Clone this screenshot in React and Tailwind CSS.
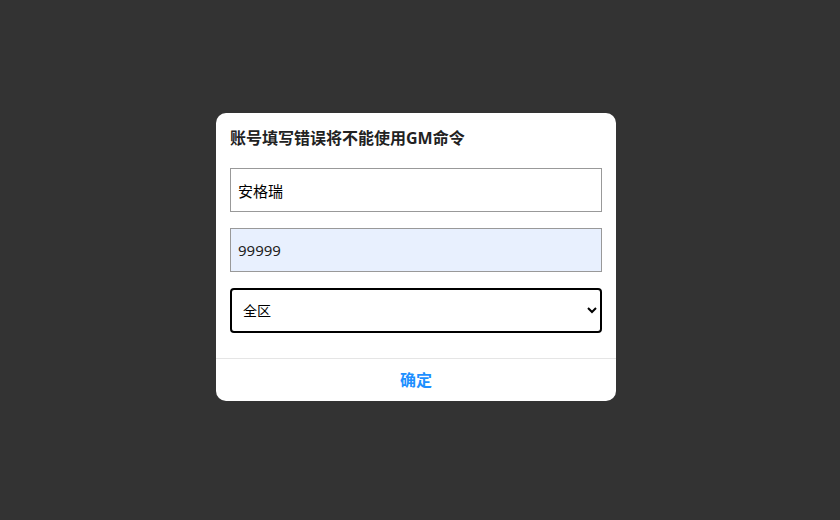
import React from 'react';

const App = () => {
  return (
    <div
      className="w-[840px] h-[520px] bg-[#333333] flex items-center justify-center pr-[8px] pb-[6px]"
      style={{ fontFamily: '"Noto Sans", "Noto Sans CJK SC", sans-serif' }}
    >
      <div className="w-[400px] h-[288px] bg-white rounded-[10px] flex flex-col overflow-hidden">
        {/* Body */}
        <div className="px-[14px] pt-[14px] flex-1">
          <h2 className="text-[16px] font-bold text-[#222] leading-[22px] mb-[19px]">
            账号填写错误将不能使用GM命令
          </h2>
          <input
            type="text"
            defaultValue="安格瑞"
            className="block w-full h-[44px] border border-[#999] px-[7px] text-[15px] text-black outline-none"
          />
          <input
            type="text"
            defaultValue="99999"
            className="block w-full h-[44px] mt-[16px] border border-[#999] bg-[#e8f0fe] px-[7px] text-[15px] text-[#222] outline-none"
          />
          <select
            defaultValue="all"
            className="block w-full h-[45px] mt-[16px] border-2 border-black rounded-[4px] px-[7px] text-[14px] text-black bg-white"
            style={{ appearance: 'auto' }}
          >
            <option value="all">全区</option>
          </select>
        </div>

        {/* Footer */}
        <div className="border-t border-[#e5e5e5] h-[43px] flex items-center justify-center">
          <button className="text-[16px] font-bold text-[#1e90ff]">确定</button>
        </div>
      </div>
    </div>
  );
};

export default App;
